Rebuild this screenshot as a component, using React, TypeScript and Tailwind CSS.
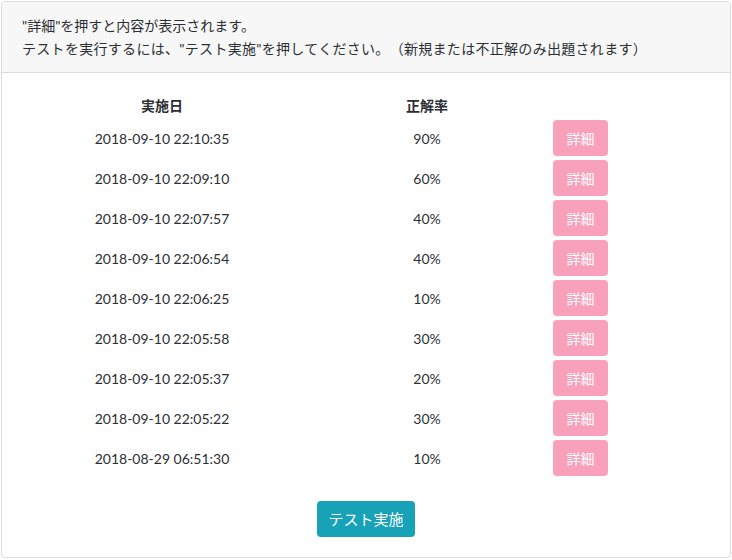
import React from "react";

const rows = [
  ["2018-09-10 22:10:35", "90%"],
  ["2018-09-10 22:09:10", "60%"],
  ["2018-09-10 22:07:57", "40%"],
  ["2018-09-10 22:06:54", "40%"],
  ["2018-09-10 22:06:25", "10%"],
  ["2018-09-10 22:05:58", "30%"],
  ["2018-09-10 22:05:37", "20%"],
  ["2018-09-10 22:05:22", "30%"],
  ["2018-08-29 06:51:30", "10%"],
];

export default function App() {
  return (
    <div
      className="w-[732px] h-[560px] bg-white p-px text-[14px] text-[#2b2f33] [text-spacing-trim:space-all]"
      style={{ fontFamily: 'Lato, "Noto Sans CJK JP", sans-serif' }}
    >
      <div className="w-[730px] h-[557px] border border-[#dcdcdc] rounded-[4px] overflow-hidden flex flex-col">
        <div className="bg-[#f7f7f7] border-b border-[#dcdcdc] px-5 py-3 leading-[23px]">
          <div>"詳細"を押すと内容が表示されます。</div>
          <div className="tracking-[0.3px]">テストを実行するには、"テスト実施"を押してください。（新規または不正解のみ出題されます）</div>
        </div>
        <div className="px-5 pt-5 flex flex-col">
          <div className="grid grid-cols-[280px_250px_1fr] h-[25px] items-center font-bold">
            <div className="text-center">実施日</div>
            <div className="text-center">正解率</div>
            <div />
          </div>
          {rows.map(([d, p], i) => (
            <div key={i} className="grid grid-cols-[280px_250px_1fr] h-[40px] items-center">
              <div className="text-center">{d}</div>
              <div className="text-center">{p}</div>
              <div className="pl-px">
                <button className="w-[55px] h-[36px] rounded-[4px] bg-[#f9a0ba] text-white text-[14px]">
                  詳細
                </button>
              </div>
            </div>
          ))}
          <div className="flex justify-center mt-[23px]">
            <button className="w-[98px] h-[36px] rounded-[4px] bg-[#17a2b8] text-white text-[15px]">
              テスト実施
            </button>
          </div>
        </div>
      </div>
    </div>
  );
}
